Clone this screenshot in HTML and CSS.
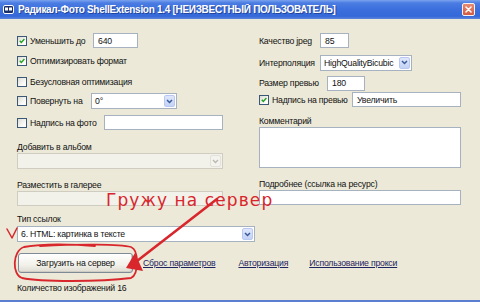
FILE: index.html
```html
<!DOCTYPE html>
<html lang="ru">
<head>
<meta charset="utf-8">
<title>Радикал-Фото ShellExtension</title>
<link rel="stylesheet" href="styles.css">
</head>
<body>
<div class="window">
  <div class="titlebar">
    <svg class="app-icon" viewBox="0 0 11 9" width="11" height="9">
      <rect x="0.5" y="0.5" width="10" height="8" rx="1.5" fill="#1b2f6e" stroke="#fff"/>
      <rect x="2" y="2.5" width="3" height="3" fill="#fff"/>
      <rect x="6" y="2.5" width="3" height="3" fill="#fff"/>
    </svg>
    <span class="title">Радикал-Фото ShellExtension 1.4 [НЕИЗВЕСТНЫЙ ПОЛЬЗОВАТЕЛЬ]</span>
    <span class="close">
      <svg viewBox="0 0 13 13" width="13" height="13"><path d="M3.5 3.5 L9.5 9.5 M9.5 3.5 L3.5 9.5" stroke="#fff" stroke-width="1.8" stroke-linecap="round"/></svg>
    </span>
  </div>

  <div class="client">
    <div class="columns">
      <div class="col-left">
        <div class="row h15">
          <label class="chk lw76"><span class="cb"><svg viewBox="0 0 10 10"><path d="M2.2 4.6 L4.2 6.8 L8 2.6" stroke="#21a121" stroke-width="1.7" fill="none"/></svg></span>Уменьшить до</label>
          <span class="tb w45">640</span>
        </div>
        <div class="row h16 mt5">
          <label class="chk"><span class="cb"><svg viewBox="0 0 10 10"><path d="M2.2 4.6 L4.2 6.8 L8 2.6" stroke="#21a121" stroke-width="1.7" fill="none"/></svg></span>Оптимизировать формат</label>
        </div>
        <div class="row h15 mt5">
          <label class="chk"><span class="cb"></span>Безусловная оптимизация</label>
        </div>
        <div class="row h16 mt4">
          <label class="chk lw74"><span class="cb"></span>Повернуть на</label>
          <span class="combo w86"><span class="val">0°</span><span class="drop"><svg viewBox="0 0 7 5"><path d="M1 1 L3.5 3.5 L6 1" stroke="#3a5a9a" stroke-width="1.5" fill="none"/></svg></span></span>
        </div>
        <div class="row h15 mt6">
          <label class="chk lw87"><span class="cb"></span>Надпись на фото</label>
          <span class="tb w119"></span>
        </div>
        <div class="field mt11">
          <span class="lbl">Добавить в альбом</span>
          <span class="combo disabled w206 h15"><span class="val"></span><span class="drop"><svg viewBox="0 0 7 5"><path d="M1 1 L3.5 3.5 L6 1" stroke="#b8b8b0" stroke-width="1.3" fill="none"/></svg></span></span>
        </div>
        <div class="field mt10">
          <span class="lbl">Разместить в галерее</span>
          <span class="tb disabled w206"></span>
        </div>
      </div>

      <div class="col-right">
        <div class="row h15">
          <span class="rl lw61">Качество jpeg</span>
          <span class="tb w29">85</span>
        </div>
        <div class="row h17 mt6">
          <span class="rl lw61">Интерполяция</span>
          <span class="combo w92"><span class="val">HighQualityBicubic</span><span class="drop"><svg viewBox="0 0 7 5"><path d="M1 1 L3.5 3.5 L6 1" stroke="#3a5a9a" stroke-width="1.5" fill="none"/></svg></span></span>
        </div>
        <div class="row h16 mt4">
          <span class="rl lw68">Размер превью</span>
          <span class="tb w38">180</span>
        </div>
        <div class="row h15 mt1">
          <label class="chk lw93"><span class="cb"><svg viewBox="0 0 10 10"><path d="M2.2 4.6 L4.2 6.8 L8 2.6" stroke="#21a121" stroke-width="1.7" fill="none"/></svg></span>Надпись на превью</label>
          <span class="tb w109">Увеличить</span>
        </div>
        <div class="field mt8">
          <span class="lbl">Комментарий</span>
          <span class="tb area"></span>
        </div>
        <div class="field mt10">
          <span class="lbl">Подробнее (ссылка на ресурс)</span>
          <span class="tb w202"></span>
        </div>
      </div>
    </div>

    <div class="field linktype">
      <span class="lbl">Тип ссылок</span>
      <span class="combo w238 h17 mt1"><span class="val">6. HTML: картинка в тексте</span><span class="drop"><svg viewBox="0 0 7 5"><path d="M1 1 L3.5 3.5 L6 1" stroke="#3a5a9a" stroke-width="1.5" fill="none"/></svg></span></span>
    </div>

    <div class="actions">
      <button class="btn" type="button">Загрузить на сервер</button>
      <a class="link l1" href="#">Сброс параметров</a>
      <a class="link l2" href="#">Авторизация</a>
      <a class="link l3" href="#">Использование прокси</a>
    </div>

    <div class="count">Количество изображений 16</div>
  </div>

  <svg class="annot" viewBox="0 0 480 302" width="480" height="302">
    <path d="M7 229 L12 238 L17 228" stroke="#d8262c" stroke-width="1.5" fill="none" stroke-linecap="round" stroke-linejoin="round"/>
    <path d="M40 246 C 80 244, 120 244, 131 247 C 139 250, 139 274, 131 278 C 100 282, 40 282, 22 278 C 12 275, 12 251, 24 247 C 40 244, 70 244, 95 246" stroke="#d8262c" stroke-width="1.8" fill="none" stroke-linecap="round"/>
    <path d="M217 199 Q 178 229 137 261" stroke="#d8262c" stroke-width="2.6" fill="none" stroke-linecap="round"/>
    <polygon points="126,268 135,253 143,271" fill="#d8262c"/>
  </svg>
  <div class="annot-text">Гружу на сервер</div>
</div>
</body>
</html>
```

FILE: styles.css
```css
* { box-sizing: border-box; }
html, body { margin: 0; padding: 0; }
body {
  width: 480px;
  height: 302px;
  overflow: hidden;
  background: #ece9d8;
  font-family: "Liberation Sans", Arial, sans-serif;
  font-size: 8.7px;
  letter-spacing: -0.2px;
  color: #111;
}
.window {
  position: relative;
  width: 480px;
  height: 302px;
  display: flex;
  flex-direction: column;
}
.titlebar {
  flex: none;
  height: 19px;
  display: flex;
  align-items: center;
  padding: 0 5px 0 3px;
  background: linear-gradient(#7aa2ee 0, #4a7ce2 3px, #3c6fdd 50%, #3568d8 85%, #5b84dc 100%);
}
.app-icon { flex: none; width: 11px; height: 9px; }
.title {
  flex: 1;
  margin-left: 4px;
  color: #fff;
  font-weight: bold;
  font-size: 10px;
  letter-spacing: -0.3px;
  white-space: nowrap;
  overflow: hidden;
  text-shadow: 1px 1px 0 #22449c;
}
.close {
  flex: none;
  width: 13px;
  height: 13px;
  display: flex;
  border: 1px solid #f2f2f2;
  border-radius: 2px;
  background: linear-gradient(#e88a72, #cf5a42);
}
.close svg { width: 11px; height: 11px; }

.client {
  flex: 1;
  padding: 14px 0 0 17px;
  border-bottom: 2px solid #5b7ed0;
}
.columns { display: flex; }
.col-left { width: 242px; display: flex; flex-direction: column; }
.col-right { width: 202px; display: flex; flex-direction: column; }

.row { display: flex; align-items: center; }
.h15 { height: 15px; }
.h16 { height: 16px; }
.h17 { height: 17px; }
.mt1 { margin-top: 1px; }
.mt4 { margin-top: 4px; }
.mt5 { margin-top: 5px; }
.mt6 { margin-top: 6px; }
.mt8 { margin-top: 8px; }
.mt10 { margin-top: 10px; }
.mt11 { margin-top: 11px; }

.chk { display: flex; align-items: center; line-height: 12px; white-space: nowrap; }
.rl { line-height: 12px; white-space: nowrap; }
.lw61 { width: 61px; flex: none; }
.lw68 { width: 68px; flex: none; }
.lw74 { width: 74px; flex: none; }
.lw76 { width: 76px; flex: none; }
.lw87 { width: 87px; flex: none; }
.lw93 { width: 93px; flex: none; }

.cb {
  flex: none;
  width: 10px;
  height: 10px;
  margin-right: 3px;
  border: 1px solid #3b5876;
  background: linear-gradient(135deg, #dcdcd6, #fbfbf9 70%);
  display: flex;
}
.cb svg { width: 8px; height: 8px; }

.tb {
  flex: none;
  display: flex;
  align-items: center;
  height: 15px;
  padding-left: 4px;
  background: #fff;
  border: 1px solid #a6b2c0;
  line-height: 12px;
}
.tb.disabled, .combo.disabled { background: #f2f1ea; border-color: #cfcdc2; }
.area { height: 41px; width: 202px; }
.w29 { width: 29px; }
.w38 { width: 38px; }
.w45 { width: 45px; }
.w86 { width: 86px; }
.w92 { width: 92px; }
.w109 { width: 109px; }
.w119 { width: 119px; }
.w202 { width: 202px; }
.w206 { width: 206px; }
.w238 { width: 238px; }

.combo {
  flex: none;
  display: flex;
  align-items: stretch;
  height: 16px;
  background: #fff;
  border: 1px solid #a6b2c0;
  padding: 1px;
}
.combo .val { flex: 1; padding-left: 2px; line-height: 12px; display: flex; align-items: center; white-space: nowrap; overflow: hidden; }
.combo .drop {
  flex: none;
  width: 11px;
  display: flex;
  align-items: center;
  justify-content: center;
  border: 1px solid #b8c8f0;
  border-radius: 2px;
  background: linear-gradient(#dfe7fb, #c3d2f6);
}
.combo.disabled .drop { background: #f4f3ee; border-color: #e2e1da; }
.combo .drop svg { width: 7px; height: 5px; }

.field { display: flex; flex-direction: column; }
.lbl { line-height: 12px; white-space: nowrap; }

.linktype { margin-top: 7px; }

.actions {
  margin-top: 11px;
  height: 20px;
  display: flex;
  align-items: center;
}
.btn {
  width: 115px;
  height: 20px;
  margin-left: 1px;
  padding: 0;
  font: inherit;
  letter-spacing: inherit;
  color: #111;
  border: 1px solid #7e8a96;
  border-radius: 3px;
  background: linear-gradient(#ffffff, #f2f1ea 60%, #dedcd1);
  box-shadow: inset -1px -1px 0 #cfcdc3;
}
.link { color: #1e2460; text-decoration: underline; white-space: nowrap; line-height: 12px; }
.l1 { margin-left: 10px; }
.l2 { margin-left: 23px; }
.l3 { margin-left: 21px; }

.count { margin-top: 9px; line-height: 12px; }

.annot {
  position: absolute;
  left: 0;
  top: 0;
  pointer-events: none;
}
.annot-text {
  position: absolute;
  left: 106px;
  top: 189px;
  color: #d8262c;
  font-family: "DejaVu Sans", Verdana, sans-serif;
  font-size: 17px;
  letter-spacing: 1.1px;
  line-height: 22px;
  white-space: nowrap;
  pointer-events: none;
}
```
